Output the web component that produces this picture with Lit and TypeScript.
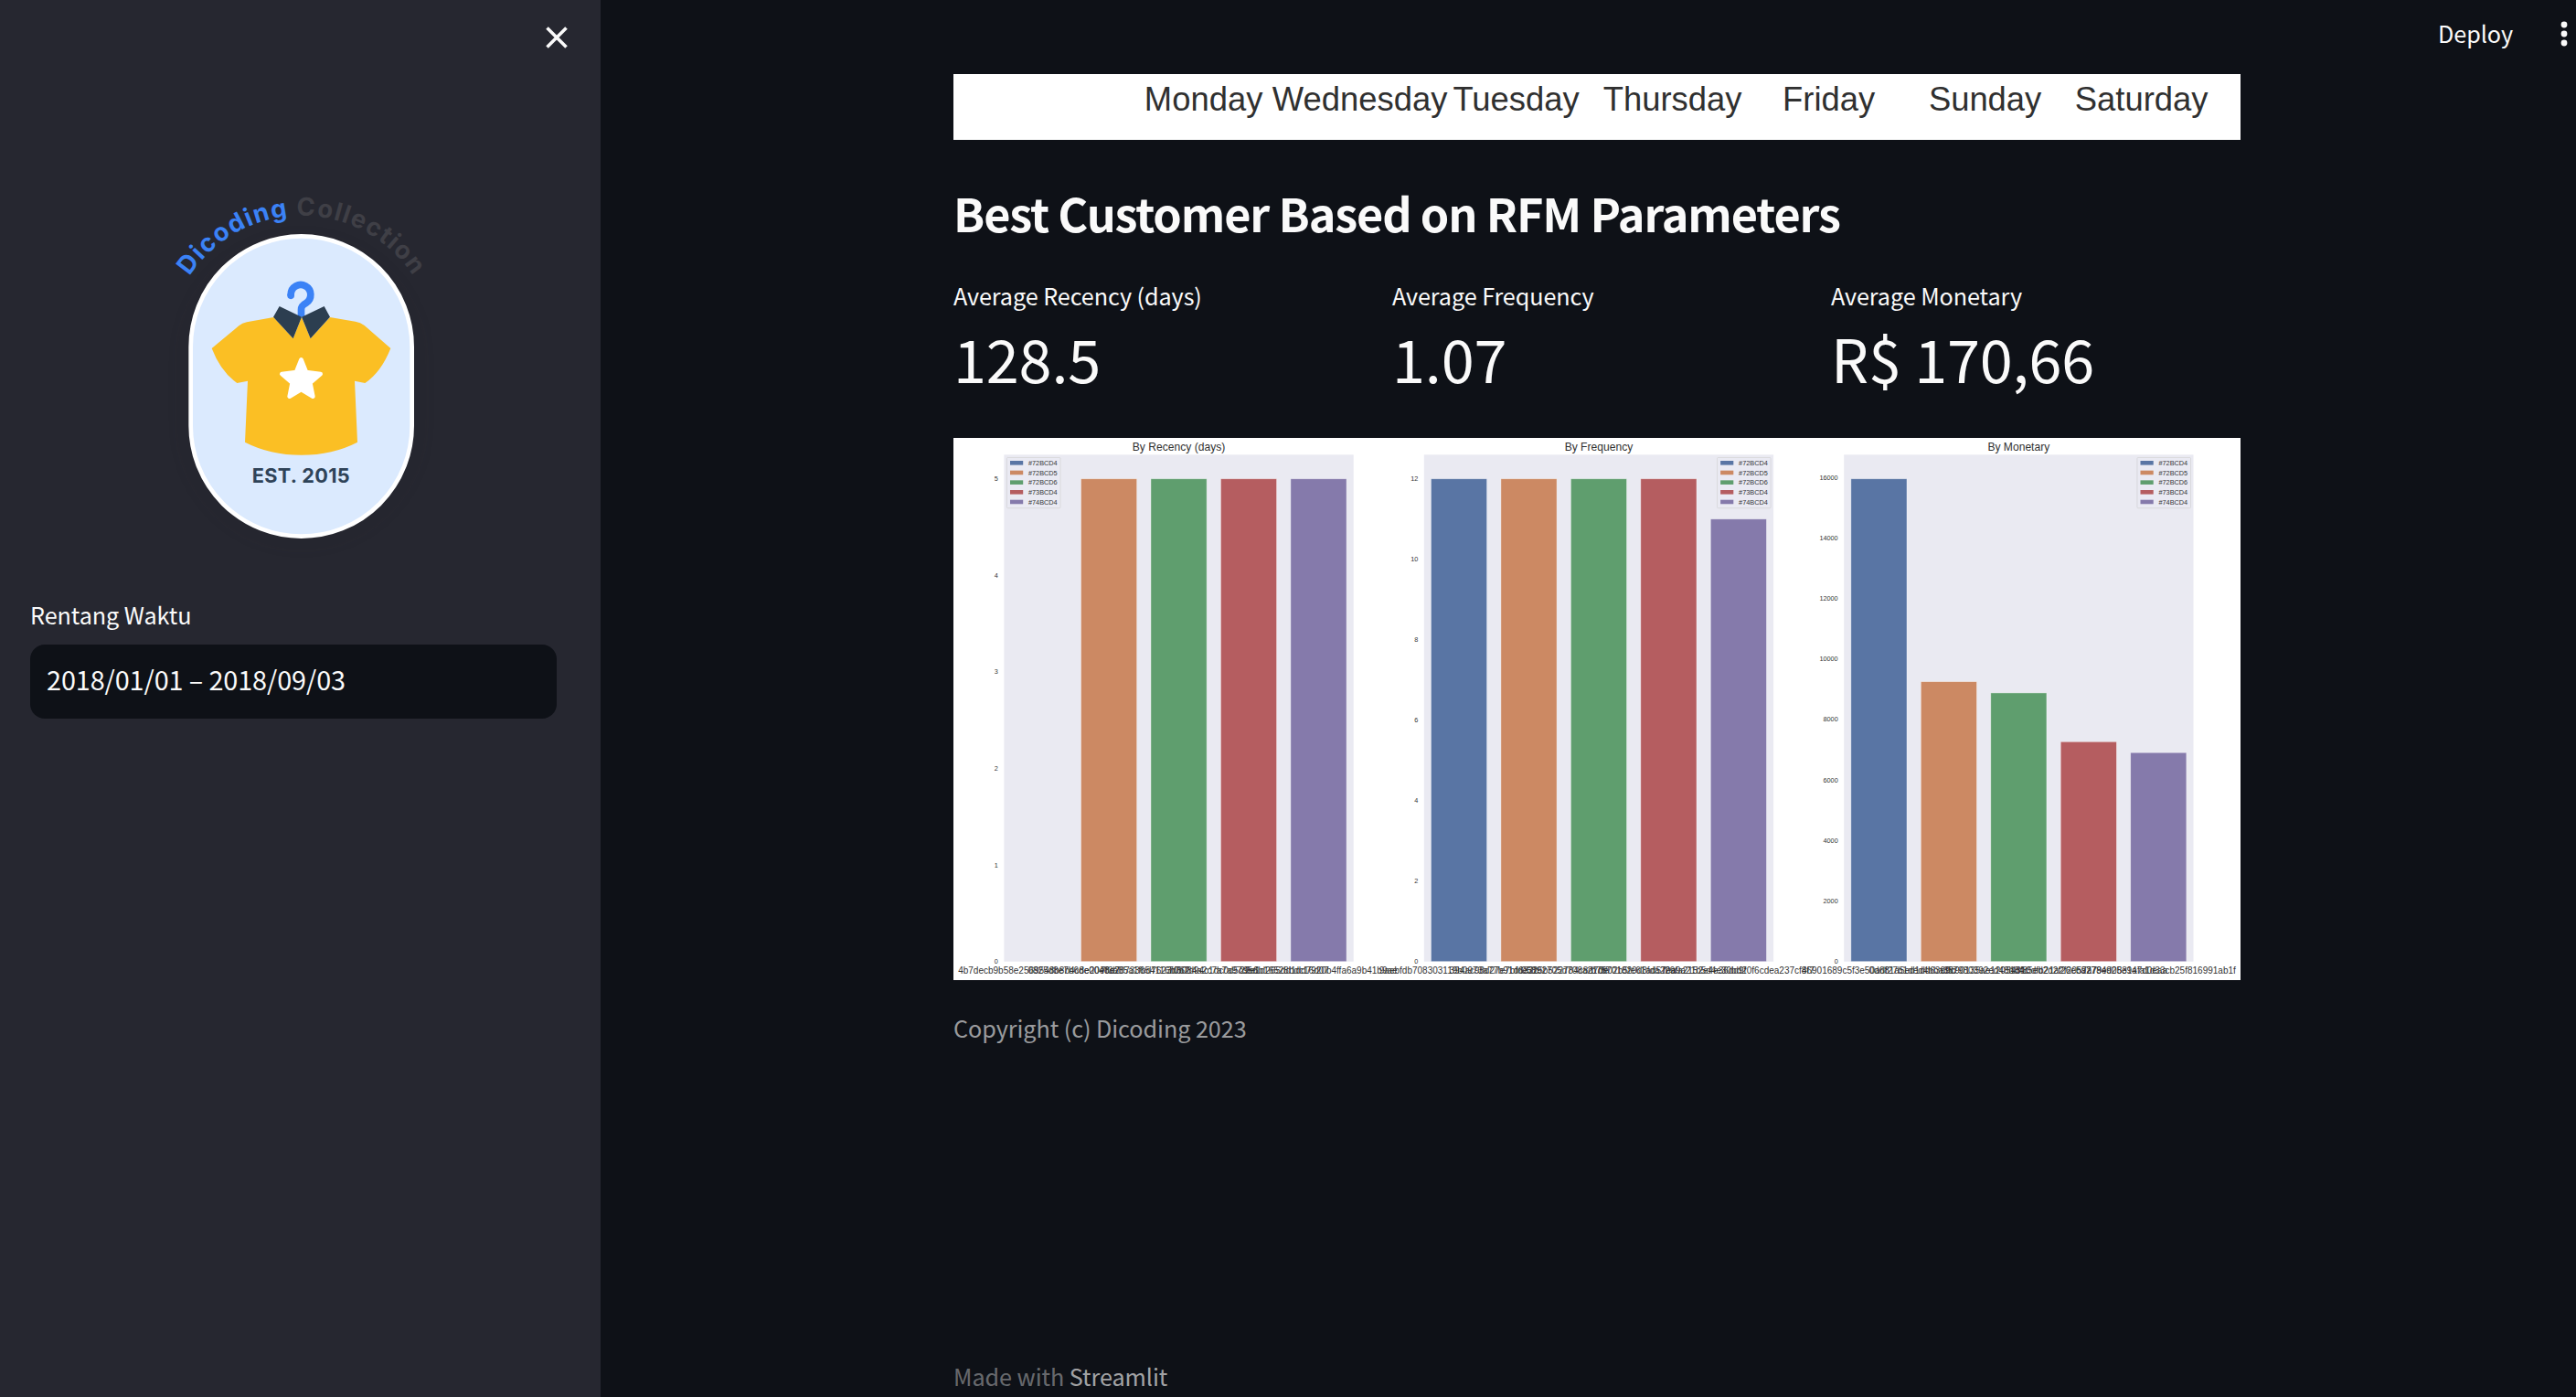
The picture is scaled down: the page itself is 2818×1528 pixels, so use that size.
import { LitElement, html, css, svg } from "lit";
import { customElement, property } from "lit/decorators.js";

const PALETTE = ["#5975a4", "#cc8963", "#5f9e6e", "#b55d60", "#857aab"];
const LEGEND = ["#72BCD4", "#72BCD5", "#72BCD6", "#73BCD4", "#74BCD4"];
const DAYS = ["Monday", "Wednesday", "Tuesday", "Thursday", "Friday", "Sunday", "Saturday"];

interface Panel {
  title: string;
  values: number[];
  max: number;
  step: number;
  top: number;
  legend: "left" | "right";
  ids: string[];
}

const PANELS: Panel[] = [
  {
    title: "By Recency (days)", values: [0, 5, 5, 5, 5], max: 5, step: 1, top: 5, legend: "left",
    ids: ["4b7decb9b58e2569548b8b4c8e20e8d7", "0825d8e7b6de0040e28733654116b762", "7f3a85a1fbd7623d5084a2c7a7a97d5d", "70b7d94c1dc0d5c9e6b16528bdc16d07", "22e1d265dd1dd7920b4ffa6a9b41b9ae"],
  },
  {
    title: "By Frequency", values: [12, 12, 12, 12, 11], max: 12, step: 2, top: 12, legend: "right",
    ids: ["9aebfdb708303119b0973a77b91d632b", "394ac98d27e7bfde325b522784c8d70e", "05892705d708a21dff02b5fe61ad57ea", "b75701820d8fda229fa2152e4e36dd9f", "f0a9a21b5d4e30bd20f6cdea237cf8f7"],
  },
  {
    title: "By Monetary", values: [15955, 9249, 8878, 7265, 6905], max: 15955, step: 2000, top: 16000, legend: "right",
    ids: ["46901689c5f3e50adf27b1ded4bba3fb", "0d681a5ed1dd639f57980392ed48b84c", "c9c90135ae12054310dfb21a2f2057a7", "1df85ed2d2f26eba7784925e947d0eaa", "9279ed0831afa1d33cb25f816991ab1f"],
  },
];

@customElement("shop-logo")
export class ShopLogo extends LitElement {
  static styles = css`
    :host { display: block; width: 330px; height: 410px; }
    svg { display: block; overflow: visible; }
    text { font-family: Inter, "Liberation Sans", sans-serif; font-weight: 700; }
    .brand { font-size: 82px; }
    .est { font-size: 65px; fill: #2f4358; }
  `;
  render() {
    return html`<svg width="330" height="410" viewBox="0 0 990 1230">
      <defs>
        <path id="arc" d="M142 336.500 A438 438 0 0 1 888 356" />
        <filter id="shade" x="-30%" y="-30%" width="160%" height="160%"><feGaussianBlur stdDeviation="30" /></filter>
      </defs>
      <rect x="120" y="215" width="778" height="1000" rx="389" fill="#1c1c24" opacity=".07" filter="url(#shade)" />
      <rect x="146" y="205" width="726" height="985" rx="363" fill="#dbeafe" stroke="#fff" stroke-width="14" />
      <text class="brand"><textPath href="#arc" textLength="868"><tspan fill="#3b82f6">Dicoding</tspan><tspan fill="#3f3f46"> Collection</tspan></textPath></text>
      <path d="M474.500 400V396A32.500 32.500 0 1 1 525 424C512 431 508.500 436 508.500 446V470" fill="none" stroke="#3b82f6" stroke-width="23" />
      <circle cx="474.500" cy="400" r="11.500" fill="#3b82f6" />
      <path fill="#fbbf24" d="M215 573L304 499Q315 490 330 487L418 471L482 541L510 471L539 541L603 471L686 485Q703 487 716 498L802 573Q771 651 718 687L684 680L693 881Q612 923 509 923Q406 923 324 881L333 680L298 687Q244 649 215 573Z" />
      <path fill="#2c3e50" d="M437 435L510 470L482 541L417 470ZM584 435L510 470L539 541L603 470Z" />
      <path fill="#fff" stroke="#fff" stroke-width="14" stroke-linejoin="round" d="M508.500 610L525 651L572 657L538 686L547 731L508.500 708L470 731L479 686L445 657L492 651Z" />
      <text class="est" x="347" y="1014" textLength="321">EST. 2015</text>
    </svg>`;
  }
}

@customElement("weekday-strip")
export class WeekdayStrip extends LitElement {
  static styles = css`
    :host { display: block; background: #fff; height: 72px; }
    svg { display: block; }
    text { font: 36.4px "Liberation Sans", Arial, sans-serif; fill: #303030; text-anchor: middle; }
  `;
  render() {
    return html`<svg width="1408" height="72">
      ${DAYS.map((d, i) => svg`<text x=${273.6 + i * 171} y="39.800">${d}</text>`)}
    </svg>`;
  }
}

@customElement("rfm-chart")
export class RfmChart extends LitElement {
  static styles = css`
    :host { display: block; background: #fff; height: 593px; }
    svg { display: block; }
    text { font-family: "Liberation Sans", Arial, sans-serif; fill: #333; }
    .title { font-size: 12.1px; text-anchor: middle; fill: #303030; }
    .tick { font-size: 7.3px; text-anchor: end; }
    .id { font-size: 10px; text-anchor: middle; }
    .key { font-size: 7.3px; }
  `;
  private panel(p: Panel, n: number) {
    const left = 55.4 + n * 459.4, top = 18.3, width = 382.3, bottom = 572.7, full = 528;
    const slot = width / 5;
    const ticks = Array.from({ length: p.top / p.step + 1 }, (_, i) => i * p.step);
    const lx = p.legend === "left" ? left + 3 : left + width - 61.6;
    return svg`
      <rect x=${left} y=${top} width=${width} height=${bottom - top} fill="#eaeaf2" />
      ${p.values.map((v, i) => {
        const h = (v / p.max) * full;
        return h
          ? svg`<rect x=${left + slot * (i + 0.1)} y=${bottom - h} width=${slot * 0.8} height=${h} fill=${PALETTE[i]} stroke="#fff" stroke-opacity=".5" stroke-width=".8" />`
          : null;
      })}
      <text class="title" x=${left + width / 2} y="13.800">${p.title}</text>
      ${ticks.map((t) => svg`<text class="tick" x=${left - 6.5} y=${bottom - (t / p.max) * full + 2.5}>${t}</text>`)}
      <rect x=${lx} y="21.500" width="58.600" height="55.200" rx="1" fill="#eaeaf2" fill-opacity=".8" stroke="#ccc" stroke-opacity=".8" stroke-width=".7" />
      ${LEGEND.map((name, i) => svg`
        <rect x=${lx + 3.6} y=${25 + i * 10.67} width="14.200" height="4.600" fill=${PALETTE[i]} />
        <text class="key" x=${lx + 23.6} y=${29.9 + i * 10.67}>${name}</text>`)}
      ${p.ids.map((id, i) => svg`<text class="id" x=${left + slot * (i + 0.5)} y="586">${id}</text>`)}
    `;
  }
  render() {
    return html`<svg width="1408" height="593">${PANELS.map((p, i) => this.panel(p, i))}</svg>`;
  }
}

@customElement("metric-card")
export class MetricCard extends LitElement {
  @property() label = "";
  @property() value = "";
  static styles = css`
    :host { display: block; color: #fafafa; height: 150px; }
    .label { font-size: 25.2px; line-height: 42px; letter-spacing: -0.08px; }
    .value { font-size: 64.8px; line-height: 94px; letter-spacing: -0.15px; }
  `;
  render() {
    return html`<div class="label">${this.label}</div><div class="value">${this.value}</div>`;
  }
}

@customElement("app-root")
export class AppRoot extends LitElement {
  static styles = css`
    :host {
      display: flex; width: 2818px; height: 1528px; overflow: hidden;
      background: #0e1117; color: #fafafa;
      font-family: "Noto Sans CJK SC", "Noto Sans", sans-serif;
      font-size: 25.2px; letter-spacing: -0.06px;
    }
    .side { width: 657px; flex: none; background: #262730; display: flex; flex-direction: column; }
    .close { height: 190px; display: flex; justify-content: flex-end; align-items: flex-start; box-sizing: border-box; padding: 25px 32px 0 0; }
    .close svg { display: block; }
    shop-logo { margin-left: 160px; letter-spacing: 0; }
    weekday-strip, rfm-chart { letter-spacing: 0; }
    .field { padding: 51px 48px 0 33px; }
    .field label { display: block; line-height: 42px; }
    .input { margin-top: 12px; height: 81px; box-sizing: border-box; border-radius: 16px; background: #0e1117; padding-left: 18px; font-size: 28.8px; line-height: 76px; letter-spacing: -0.1px; }
    .main { flex: 1; display: flex; flex-direction: column; }
    .bar { height: 81px; flex: none; display: flex; justify-content: flex-end; gap: 51px; line-height: 72px; }
    .bar svg { display: block; }
    .content { flex: 1; margin-left: 386px; width: 1408px; display: flex; flex-direction: column; }
    h3 { margin: 40px 0 0; font-size: 50.4px; line-height: 80px; font-weight: 700; letter-spacing: -1.14px; color: #fafafa; }
    .metrics { display: grid; grid-template-columns: repeat(3, 448px); gap: 32px; margin-top: 29px; }
    rfm-chart { margin-top: 27px; }
    .caption { margin-top: 32px; line-height: 41px; color: rgba(250, 250, 250, .6); }
    .foot { margin-top: auto; line-height: 46px; color: rgba(250, 250, 250, .4); }
    .foot span { color: rgba(250, 250, 250, .65); }
  `;
  render() {
    return html`
      <aside class="side">
        <div class="close">
          <svg width="32" height="32" viewBox="0 0 32 32"><path d="M5.500 5.500L26.500 26.500M26.500 5.500L5.500 26.500" stroke="#fafafa" stroke-width="3.600" /></svg>
        </div>
        <shop-logo></shop-logo>
        <div class="field">
          <label>Rentang Waktu</label>
          <div class="input">2018/01/01 – 2018/09/03</div>
        </div>
      </aside>
      <main class="main">
        <header class="bar">
          <span>Deploy</span>
          <svg width="18" height="60"><g fill="#fafafa"><circle cx="5" cy="27" r="3.400" /><circle cx="5" cy="37" r="3.400" /><circle cx="5" cy="47" r="3.400" /></g></svg>
        </header>
        <section class="content">
          <weekday-strip></weekday-strip>
          <h3>Best Customer Based on RFM Parameters</h3>
          <div class="metrics">
            <metric-card label="Average Recency (days)" value="128.5"></metric-card>
            <metric-card label="Average Frequency" value="1.07"></metric-card>
            <metric-card label="Average Monetary" value="R$ 170,66"></metric-card>
          </div>
          <rfm-chart></rfm-chart>
          <div class="caption">Copyright (c) Dicoding 2023</div>
          <footer class="foot">Made with <span>Streamlit</span></footer>
        </section>
      </main>`;
  }
}
